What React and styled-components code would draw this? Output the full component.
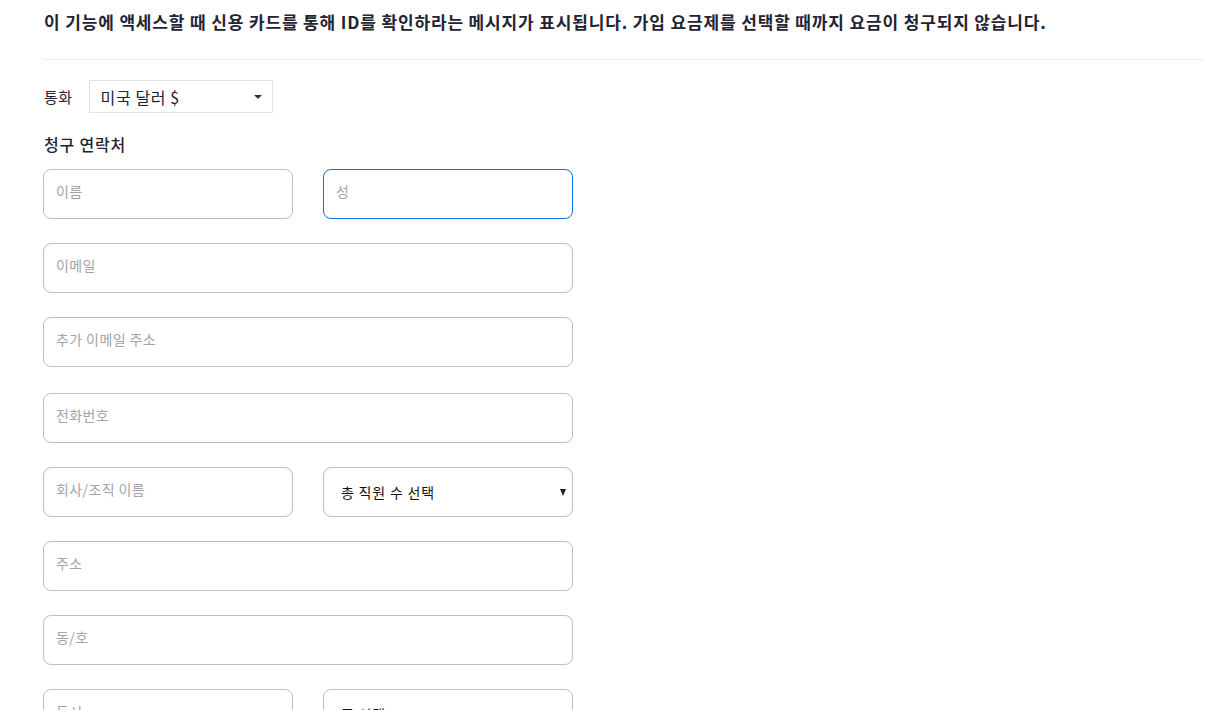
import React from 'react';
import styled, { createGlobalStyle } from 'styled-components';

const GlobalStyle = createGlobalStyle`
  html, body {
    margin: 0;
    padding: 0;
    background: #fff;
    overflow: hidden;
  }
  body {
    font-family: "Noto Sans CJK KR", "Noto Sans", sans-serif;
    color: #232333;
  }
`;

const Page = styled.main`
  padding-left: 43px;
  height: 710px;
  overflow: hidden;
`;

const Notice = styled.p`
  margin: 0;
  padding: 11px 0 26px 1px;
  font-size: 17px;
  line-height: 22px;
  font-weight: 700;
  letter-spacing: 0.85px;
  color: #232333;
  border-bottom: 1px solid #ececec;
  white-space: nowrap;
`;

const CurrencyRow = styled.div`
  display: flex;
  align-items: center;
  gap: 16px;
  margin-top: 20px;
`;

const Label = styled.span`
  font-size: 15px;
  letter-spacing: 0.5px;
  color: #232333;
  padding-left: 1px;
`;

const CurrencySelect = styled.div`
  width: 184px;
  height: 33px;
  box-sizing: border-box;
  border: 1px solid #e3e3e3;
  display: flex;
  align-items: center;
  justify-content: space-between;
  padding: 0 10px 0 11px;
  font-size: 16px;
  letter-spacing: 0.6px;
  color: #232333;
`;

const Caret = styled.span`
  width: 0;
  height: 0;
  border-left: 4px solid transparent;
  border-right: 4px solid transparent;
  border-top: 4px solid #333;
`;

const SectionTitle = styled.h3`
  margin: 21px 0 15px 1px;
  font-size: 16px;
  line-height: 20px;
  font-weight: 500;
  letter-spacing: 0.8px;
  color: #232333;
`;

const FormGrid = styled.div`
  display: grid;
  grid-template-columns: 250px 250px;
  column-gap: 30px;
  row-gap: 24px;
  width: 530px;
`;

const Field = styled.input`
  grid-column: ${p => (p.$wide ? '1 / span 2' : 'auto')};
  margin-top: ${p => p.$shift || 0}px;
  height: 50px;
  box-sizing: border-box;
  border: 1px solid ${p => (p.$focused ? '#0e72ed' : '#bebdcc')};
  border-radius: 8px;
  padding: 0 12px 6px;
  font-family: inherit;
  font-size: 14px;
  letter-spacing: 0.4px;
  color: #232333;
  outline: none;
  background: #fff;

  &::placeholder {
    color: #a3a3ab;
  }
`;

const SelectField = styled.div`
  height: 50px;
  box-sizing: border-box;
  border: 1px solid #bebdcc;
  border-radius: 8px;
  padding: 0 6px 0 17px;
  display: flex;
  align-items: center;
  justify-content: space-between;
  font-size: 14px;
  letter-spacing: 0.8px;
  color: #111;
`;

const SmallArrow = styled.span`
  width: 0;
  height: 0;
  border-left: 3px solid transparent;
  border-right: 3px solid transparent;
  border-top: 7px solid #222;
`;

export default function App() {
  return (
    <>
      <GlobalStyle />
      <Page>
        <Notice>
          이 기능에 액세스할 때 신용 카드를 통해 ID를 확인하라는 메시지가 표시됩니다. 가입 요금제를 선택할 때까지 요금이 청구되지 않습니다.
        </Notice>
        <CurrencyRow>
          <Label>통화</Label>
          <CurrencySelect>
            <span>미국 달러 $</span>
            <Caret />
          </CurrencySelect>
        </CurrencyRow>
        <SectionTitle>청구 연락처</SectionTitle>
        <FormGrid>
          <Field placeholder="이름" />
          <Field placeholder="성" $focused />
          <Field placeholder="이메일" $wide />
          <Field placeholder="추가 이메일 주소" $wide />
          <Field placeholder="전화번호" $wide $shift={2} />
          <Field placeholder="회사/조직 이름" />
          <SelectField>
            <span>총 직원 수 선택</span>
            <SmallArrow />
          </SelectField>
          <Field placeholder="주소" $wide />
          <Field placeholder="동/호" $wide />
          <Field placeholder="도시" />
          <SelectField>
            <span>주 선택</span>
            <SmallArrow />
          </SelectField>
        </FormGrid>
      </Page>
    </>
  );
}
